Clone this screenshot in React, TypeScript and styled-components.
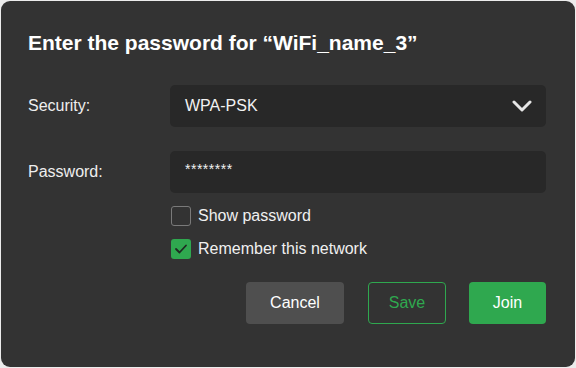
import React from 'react';
import styled, { createGlobalStyle } from 'styled-components';

const Global = createGlobalStyle`
  html, body {
    margin: 0;
    padding: 0;
    background: #ececec;
  }
  body {
    font-family: "Liberation Sans", Arial, sans-serif;
  }
`;

const Dialog = styled.div`
  box-sizing: border-box;
  margin: 1px;
  width: 574px;
  height: 366px;
  background: #333333;
  border-radius: 9px;
  padding: 27px 29px 0 27px;
  color: #f2f2f2;
`;

const Title = styled.h1`
  margin: 0 0 27px;
  font-size: 21px;
  font-weight: 700;
  line-height: 30px;
  color: #ffffff;
`;

const Row = styled.div<{ gap: number }>`
  display: grid;
  grid-template-columns: 142px 1fr;
  align-items: center;
  margin-bottom: ${(p) => p.gap}px;
`;

const Label = styled.div`
  font-size: 16px;
  color: #eeeeee;
`;

const Field = styled.div`
  box-sizing: border-box;
  height: 42px;
  background: #282828;
  border-radius: 5px;
  display: flex;
  align-items: center;
  justify-content: space-between;
  padding: 0 14px 0 15px;
  font-size: 16px;
  color: #f2f2f2;
`;

const Masked = styled.span`
  font-size: 14px;
  letter-spacing: 0.5px;
  margin-top: -6px;
`;

const Checks = styled.div`
  display: flex;
  flex-direction: column;
  gap: 13px;
  margin-left: 143px;
`;

const CheckRow = styled.label`
  display: flex;
  align-items: center;
  gap: 7px;
  height: 20px;
  font-size: 16px;
  color: #f0f0f0;
`;

const Box = styled.span<{ checked?: boolean }>`
  box-sizing: border-box;
  width: 20px;
  height: 20px;
  border-radius: 3px;
  border: ${(p) => (p.checked ? 'none' : '1.5px solid #7a7a7a')};
  background: ${(p) => (p.checked ? '#2fa84f' : 'transparent')};
  display: flex;
  align-items: center;
  justify-content: center;
`;

const Actions = styled.div`
  display: flex;
  justify-content: flex-end;
  margin-top: 23px;
`;

const Btn = styled.button<{ kind: 'cancel' | 'save' | 'join' }>`
  box-sizing: border-box;
  height: 42px;
  border-radius: 4px;
  font-family: inherit;
  font-size: 16px;
  cursor: pointer;
  width: ${(p) => (p.kind === 'cancel' ? 98 : p.kind === 'save' ? 78 : 77)}px;
  margin-left: ${(p) => (p.kind === 'cancel' ? 0 : p.kind === 'save' ? 24 : 23)}px;
  background: ${(p) => (p.kind === 'cancel' ? '#4f4f4f' : p.kind === 'join' ? '#2fa84f' : 'transparent')};
  color: ${(p) => (p.kind === 'save' ? '#2fa84f' : '#ffffff')};
  border: ${(p) => (p.kind === 'save' ? '1.5px solid #2fa84f' : 'none')};
`;

const Chevron = () => (
  <svg width="20" height="14" viewBox="0 0 20 14">
    <path d="M2 3 L10 11 L18 3" fill="none" stroke="#e6e6e6" strokeWidth="3" strokeLinecap="round" strokeLinejoin="round" />
  </svg>
);

const Tick = () => (
  <svg width="14" height="12" viewBox="0 0 14 12">
    <path d="M2 6 L5.5 9.5 L12 2.5" fill="none" stroke="#1f2a22" strokeWidth="1.8" strokeLinecap="round" strokeLinejoin="round" />
  </svg>
);

const App = () => {
  return (
    <>
      <Global />
      <Dialog>
        <Title>Enter the password for “WiFi_name_3”</Title>
        <Row gap={24}>
          <Label>Security:</Label>
          <Field>
            <span>WPA-PSK</span>
            <Chevron />
          </Field>
        </Row>
        <Row gap={13}>
          <Label>Password:</Label>
          <Field>
            <Masked>********</Masked>
          </Field>
        </Row>
        <Checks>
          <CheckRow>
            <Box />
            Show password
          </CheckRow>
          <CheckRow>
            <Box checked>
              <Tick />
            </Box>
            Remember this network
          </CheckRow>
        </Checks>
        <Actions>
          <Btn kind="cancel">Cancel</Btn>
          <Btn kind="save">Save</Btn>
          <Btn kind="join">Join</Btn>
        </Actions>
      </Dialog>
    </>
  );
};

export default App;
